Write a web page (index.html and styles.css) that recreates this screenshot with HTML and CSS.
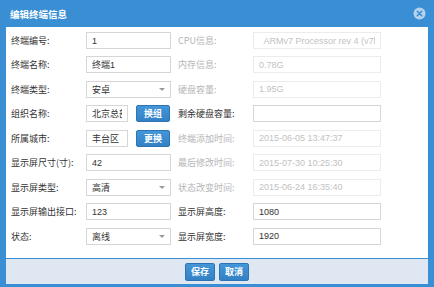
FILE: index.html
```html
<!DOCTYPE html>
<html lang="zh">
<head>
    <meta charset="UTF-8">
    <title>编辑终端信息</title>
    <link rel="stylesheet" href="styles.css">
</head>
<body>
<div class="dialog">
    <div class="title">
        <span>编辑终端信息</span>
        <svg class="close" viewBox="0 0 13 13"><circle cx="6.5" cy="6.5" r="6" fill="#b5d2ec"/><path d="M4.3 4.3 L8.7 8.7 M8.7 4.3 L4.3 8.7" stroke="#3a8fd4" stroke-width="1.6" stroke-linecap="round"/></svg>
    </div>
    <div class="body">
        <div class="form">
            <label>终端编号:</label>
            <input class="inp" value="1">
            <label class="lbl2 off">CPU信息:</label>
            <input class="inp" value="  ARMv7 Processor rev 4 (v7l)" disabled>

            <label>终端名称:</label>
            <input class="inp" value="终端1">
            <label class="lbl2 off">内存信息:</label>
            <input class="inp" value="0.78G" disabled>

            <label>终端类型:</label>
            <div class="select"><span>安卓</span></div>
            <label class="lbl2 off">硬盘容量:</label>
            <input class="inp" value="1.95G" disabled>

            <label>组织名称:</label>
            <div class="field"><input class="inp short" value="北京总部"><button class="btn">换组</button></div>
            <label class="lbl2">剩余硬盘容量:</label>
            <input class="inp" value="">

            <label>所属城市:</label>
            <div class="field"><input class="inp short" value="丰台区"><button class="btn">更换</button></div>
            <label class="lbl2 off">终端添加时间:</label>
            <input class="inp" value="2015-06-05 13:47:37" disabled>

            <label>显示屏尺寸(寸):</label>
            <input class="inp" value="42">
            <label class="lbl2 off">最后修改时间:</label>
            <input class="inp" value="2015-07-30 10:25:30" disabled>

            <label>显示屏类型:</label>
            <div class="select"><span>高清</span></div>
            <label class="lbl2 off">状态改变时间:</label>
            <input class="inp" value="2015-06-24 16:35:40" disabled>

            <label>显示屏输出接口:</label>
            <input class="inp" value="123">
            <label class="lbl2">显示屏高度:</label>
            <input class="inp" value="1080">

            <label>状态:</label>
            <div class="select"><span>离线</span></div>
            <label class="lbl2">显示屏宽度:</label>
            <input class="inp" value="1920">
        </div>
    </div>
    <div class="footer">
        <button class="btn foot-btn">保存</button>
        <button class="btn foot-btn">取消</button>
    </div>
</div>
</body>
</html>
```

FILE: styles.css
```css
body {
    margin: 0;
    font-family: "Noto Sans CJK SC", sans-serif;
    font-size: 9px;
    color: #333;
}
.dialog {
    width: 434px;
    height: 287px;
    background: #3a8fd4;
    display: flex;
    flex-direction: column;
}
.title {
    height: 27px;
    display: flex;
    align-items: center;
    justify-content: space-between;
    padding: 0 8px 0 10px;
    color: #fff;
    font-weight: bold;
    font-size: 9.5px;
}
.close { width: 13px; height: 13px; }
.body {
    margin: 0 6px;
    height: 231px;
    background: #fff;
    padding: 5px 0 0 5px;
    box-sizing: border-box;
}
.form {
    display: grid;
    grid-template-columns: 75px 85px 82px 128px;
    grid-auto-rows: 17px;
    row-gap: 7.45px;
}
.form label { line-height: 17px; white-space: nowrap; }
.form .lbl2 { padding-left: 7px; }
.form .off { color: #b5b5b5; }
.inp {
    box-sizing: border-box;
    width: 100%;
    height: 17px;
    margin: 0;
    padding: 0 5px;
    border: 1px solid #d6d6d6;
    font-family: "Liberation Sans", "Noto Sans CJK SC", sans-serif;
    font-size: 9px;
    color: #333;
    background: #fff;
    outline: none;
}
.inp:disabled { border-color: #ececec; color: #c2c2c2; background: #fff; }
.field { display: flex; gap: 8px; }
.inp.short { width: 42px; }
.select {
    position: relative;
    box-sizing: border-box;
    height: 17px;
    border: 1px solid #d6d6d6;
    padding: 0 5px;
    line-height: 15px;
}
.select::after {
    content: "";
    position: absolute;
    right: 5px;
    top: 6px;
    border-left: 3px solid transparent;
    border-right: 3px solid transparent;
    border-top: 3px solid #9a9a9a;
}
.btn {
    width: 34px;
    height: 17px;
    padding: 0;
    border: 1px solid #2c74b4;
    border-radius: 2px;
    background: linear-gradient(#4396d8, #3381c4);
    color: #fff;
    font-family: "Noto Sans CJK SC", sans-serif;
    font-size: 9px;
    font-weight: bold;
}
.footer {
    margin: 1px 6px 0;
    height: 25px;
    background: #dfe8f2;
    display: flex;
    justify-content: center;
    align-items: center;
    gap: 4px;
}
.foot-btn { width: 30px; height: 18px; }
```
